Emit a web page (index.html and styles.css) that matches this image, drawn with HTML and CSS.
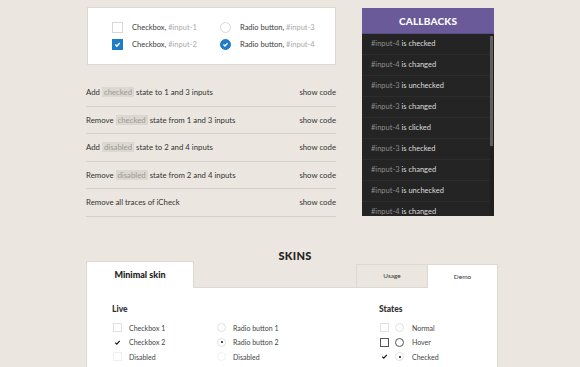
FILE: index.html
```html
<!DOCTYPE html>
<html>
<head>
<meta charset="utf-8">
<link rel="stylesheet" href="styles.css">
</head>
<body>
<div class="page">
  <div class="top">
    <div class="left">
      <div class="demo-box">
        <div class="opt"><span class="fcb"></span><span class="lbl">Checkbox, <em>#input-1</em></span></div>
        <div class="opt"><span class="frd"></span><span class="lbl">Radio button, <em>#input-3</em></span></div>
        <div class="opt"><span class="fcb on"><svg viewBox="0 0 10 10"><path d="M2.6 5.1 L4.3 6.8 L7.5 3.4" fill="none" stroke="#fff" stroke-width="1.6"/></svg></span><span class="lbl">Checkbox, <em>#input-2</em></span></div>
        <div class="opt"><span class="frd on"><svg viewBox="0 0 11 11"><path d="M3 5.6 L4.8 7.3 L8 3.9" fill="none" stroke="#fff" stroke-width="1.6"/></svg></span><span class="lbl">Radio button, <em>#input-4</em></span></div>
      </div>
      <ul class="actions">
        <li><span>Add <mark>checked</mark> state to 1 and 3 inputs</span><span class="code">show code</span></li>
        <li><span>Remove <mark>checked</mark> state from 1 and 3 inputs</span><span class="code">show code</span></li>
        <li><span>Add <mark>disabled</mark> state to 2 and 4 inputs</span><span class="code">show code</span></li>
        <li><span>Remove <mark>disabled</mark> state from 2 and 4 inputs</span><span class="code">show code</span></li>
        <li><span>Remove all traces of iCheck</span><span class="code">show code</span></li>
      </ul>
    </div>
    <div class="callbacks">
      <div class="cb-head">CALLBACKS</div>
      <ul class="cb-list">
        <li><em>#input-4</em> is checked</li>
        <li><em>#input-4</em> is changed</li>
        <li><em>#input-3</em> is unchecked</li>
        <li><em>#input-3</em> is changed</li>
        <li><em>#input-4</em> is clicked</li>
        <li><em>#input-3</em> is checked</li>
        <li><em>#input-3</em> is changed</li>
        <li><em>#input-4</em> is unchecked</li>
        <li><em>#input-4</em> is changed</li>
      </ul>
      <div class="cb-thumb"></div>
    </div>
  </div>

  <h2 class="skins-title">SKINS</h2>

  <div class="skin">
    <div class="tabs">
      <div class="tab-main">Minimal skin</div>
      <div class="tab-gap"></div>
      <div class="tab-small usage">Usage</div>
      <div class="tab-small demo">Demo</div>
    </div>
    <div class="panel">
      <div class="col-live">
        <h3>Live</h3>
        <div class="grid">
          <div class="mopt"><span class="mcb"></span>Checkbox 1</div>
          <div class="mopt"><span class="mrd"></span>Radio button 1</div>
          <div class="mopt"><span class="mcb chk"><svg viewBox="0 0 9 9"><path d="M1.6 4.6 L3.6 6.6 L7.4 2.4" fill="none" stroke="#111" stroke-width="1.5"/></svg></span>Checkbox 2</div>
          <div class="mopt"><span class="mrd dot"></span>Radio button 2</div>
          <div class="mopt"><span class="mcb dis"></span>Disabled</div>
          <div class="mopt"><span class="mrd dis"></span>Disabled</div>
        </div>
      </div>
      <div class="col-states">
        <h3>States</h3>
        <div class="srow"><span class="mcb"></span><span class="mrd"></span>Normal</div>
        <div class="srow"><span class="mcb hov"></span><span class="mrd hov"></span>Hover</div>
        <div class="srow"><span class="mcb chk"><svg viewBox="0 0 9 9"><path d="M1.6 4.6 L3.6 6.6 L7.4 2.4" fill="none" stroke="#111" stroke-width="1.5"/></svg></span><span class="mrd dot"></span>Checked</div>
      </div>
    </div>
  </div>
</div>
</body>
</html>
```

FILE: styles.css
```css
* { box-sizing: border-box; }
html, body { margin: 0; padding: 0; }
body {
  background: #ebe7e0;
  font-family: Lato, "Open Sans", sans-serif;
  font-size: 8px;
  color: #3d3d3d;
  height: 367px;
  overflow: hidden;
}
ul { list-style: none; margin: 0; padding: 0; }
em { font-style: normal; }

.page {
  width: 412px;
  margin-left: 86px;
  padding-top: 7px;
}
.top {
  display: flex;
  gap: 26px;
  align-items: flex-start;
}
.left { width: 250px; }

.demo-box {
  margin-left: 1px;
  width: 249px;
  height: 58px;
  background: #fff;
  border: 1px solid #dcd7cf;
  display: grid;
  grid-template-columns: 108px 100px;
  grid-auto-rows: 17px;
  padding: 14px 0 0 24px;
}
.opt { display: flex; align-items: center; height: 11px; }
.lbl { margin-left: 9px; color: #3b3b3b; font-size: 7.5px; }
.lbl em { color: #a9a9a9; }
.fcb, .frd {
  width: 11px; height: 11px;
  border: 1px solid #d8d8d8;
  background: #fff;
  flex: none;
  display: flex;
}
.frd { border-radius: 50%; }
.fcb.on, .frd.on { background: #1e7cc8; border-color: #1e7cc8; }
.fcb svg, .frd svg { width: 100%; height: 100%; }

.actions { margin-top: 14px; }
.actions li {
  display: flex;
  justify-content: space-between;
  align-items: center;
  height: 27.5px;
  border-bottom: 1px solid #d6d1c8;
  color: #333;
  font-size: 7.8px;
}
mark {
  background: #dcd7cf;
  color: #9a9a9a;
  padding: 0 2px;
}
.code { color: #333; }

.callbacks {
  position: relative;
  width: 132px;
  margin-top: 1px;
}
.cb-head {
  height: 26px;
  background: #6a5a99;
  color: #fff;
  font-weight: 900;
  font-size: 10px;
  letter-spacing: 0.2px;
  display: flex;
  align-items: center;
  justify-content: center;
  border-bottom: 1px solid #5a4c84;
}
.cb-list {
  background: #242424;
  height: 182px;
  overflow: hidden;
  border-right: 4px solid #1f1f1f;
}
.cb-list li {
  height: 21px;
  line-height: 20px;
  padding-left: 9px;
  border-bottom: 1px solid #2c2c2c;
  color: #dcdcdc;
  font-size: 7.5px;
}
.cb-list em { color: #8e8e8e; }
.cb-thumb {
  position: absolute;
  right: 1px;
  top: 28px;
  width: 3px;
  height: 110px;
  background: #5f5f5f;
}

.skins-title {
  margin: 33px 0 0;
  text-align: center;
  font-size: 11px;
  font-weight: 900;
  color: #222;
  height: 11px;
  line-height: 11px;
  letter-spacing: 0.3px;
  padding-left: 6px;
}

.tabs {
  display: flex;
  align-items: flex-end;
  height: 27px;
}
.tab-main {
  width: 108px;
  height: 27px;
  background: #fff;
  border: 1px solid #ddd8d0;
  border-bottom: none;
  display: flex;
  align-items: center;
  justify-content: center;
  font-weight: 900;
  font-size: 9px;
  color: #222;
}
.tab-gap {
  flex: 1;
  height: 1px;
  background: #ddd8d0;
}
.tab-small {
  height: 24px;
  display: flex;
  align-items: center;
  justify-content: center;
  font-size: 6.5px;
  color: #333;
}
.usage {
  width: 72px;
  background: #ebe7e0;
  border: 1px solid #ddd8d0;
}
.demo {
  width: 70px;
  background: #fff;
  border-top: 1px solid #ddd8d0;
  border-right: 1px solid #ddd8d0;
}

.panel {
  background: #fff;
  border-left: 1px solid #ddd8d0;
  border-right: 1px solid #ddd8d0;
  height: 80px;
  display: flex;
  padding: 15px 0 0 25px;
}
h3 {
  margin: 0 0 6px;
  font-size: 8.5px;
  font-weight: 900;
  color: #333;
  height: 12px;
  line-height: 12px;
}
.col-live { width: 267px; }
.grid {
  display: grid;
  grid-template-columns: 104px 100px;
  grid-auto-rows: 14.5px;
}
.mopt, .srow {
  display: flex;
  align-items: center;
  font-size: 7px;
  color: #444;
}
.srow { height: 14.5px; }
.mcb, .mrd {
  width: 9px; height: 9px;
  border: 1px solid #e1e1e1;
  flex: none;
  display: flex;
  align-items: center;
  justify-content: center;
  margin-right: 7px;
  margin-left: 1px;
}
.mrd { border-radius: 50%; }
.mcb.chk { border-color: #fff; }
.mcb svg { width: 9px; height: 9px; }
.mrd.dot::after {
  content: "";
  width: 2px; height: 2px;
  border-radius: 50%;
  background: #111;
}
.mcb.dis, .mrd.dis { border-color: #f0f0f0; }
.mcb.hov, .mrd.hov { border-color: #555; }
.col-states .mcb { margin-right: 5px; }
.col-states .mrd { margin-right: 8px; }
```
